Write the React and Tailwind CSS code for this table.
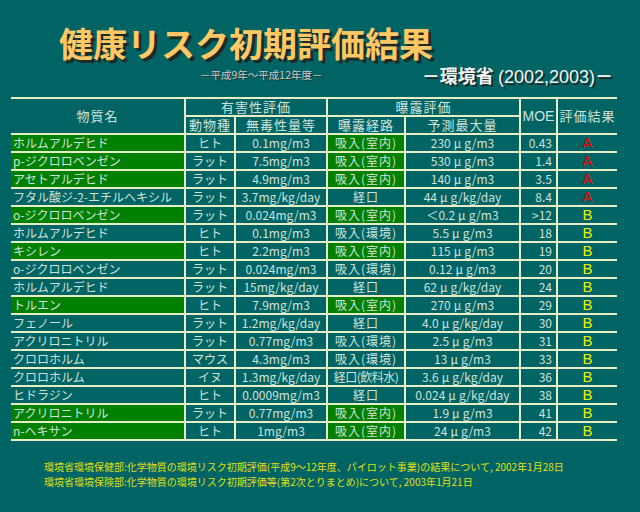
import React from "react";

const rows = [
  ["ホルムアルデヒド", "ヒト", "0.1mg/m3", "吸入(室内)", "230", "g/m3", "0.43", "A", true],
  ["p-ジクロロベンゼン", "ラット", "7.5mg/m3", "吸入(室内)", "530", "g/m3", "1.4", "A", true],
  ["アセトアルデヒド", "ラット", "4.9mg/m3", "吸入(室内)", "140", "g/m3", "3.5", "A", true],
  ["フタル酸ジ-2-エチルヘキシル", "ラット", "3.7mg/kg/day", "経口", "44", "g/kg/day", "8.4", "A", false],
  ["o-ジクロロベンゼン", "ラット", "0.024mg/m3", "吸入(室内)", "＜0.2", "g/m3", ">12", "B", true],
  ["ホルムアルデヒド", "ヒト", "0.1mg/m3", "吸入(環境)", "5.5", "g/m3", "18", "B", false],
  ["キシレン", "ヒト", "2.2mg/m3", "吸入(室内)", "115", "g/m3", "19", "B", true],
  ["o-ジクロロベンゼン", "ラット", "0.024mg/m3", "吸入(環境)", "0.12", "g/m3", "20", "B", false],
  ["ホルムアルデヒド", "ラット", "15mg/kg/day", "経口", "62", "g/kg/day", "24", "B", false],
  ["トルエン", "ヒト", "7.9mg/m3", "吸入(室内)", "270", "g/m3", "29", "B", true],
  ["フェノール", "ラット", "1.2mg/kg/day", "経口", "4.0", "g/kg/day", "30", "B", false],
  ["アクリロニトリル", "ラット", "0.77mg/m3", "吸入(環境)", "2.5", "g/m3", "31", "B", false],
  ["クロロホルム", "マウス", "4.3mg/m3", "吸入(環境)", "13", "g/m3", "33", "B", false],
  ["クロロホルム", "イヌ", "1.3mg/kg/day", "経口(飲料水)", "3.6", "g/kg/day", "36", "B", false],
  ["ヒドラジン", "ヒト", "0.0009mg/m3", "経口", "0.024", "g/kg/day", "38", "B", false],
  ["アクリロニトリル", "ラット", "0.77mg/m3", "吸入(室内)", "1.9", "g/m3", "41", "B", true],
  ["n-ヘキサン", "ヒト", "1mg/m3", "吸入(室内)", "24", "g/m3", "42", "B", true],
];

const teal = "bg-[#006464]";

export default function App() {
  return (
    <div className="w-[640px] h-[512px] bg-[#006464] overflow-hidden font-['Noto_Sans_CJK_JP',sans-serif] text-[#d0e2dc]">
      <div className="h-[97px] flex flex-col">
        <div className="mt-[25px] pl-[59px] h-[36px] text-[34px] leading-[36px] font-bold text-[#ffc864] [text-shadow:3px_3px_0_#1c2a28] whitespace-nowrap">
          健康リスク初期評価結果
        </div>
        <div className="flex h-[36px]">
          <div className="ml-[200px] mt-[7px] text-[10.5px] leading-[14px] text-[#c4cfcc] [text-shadow:1px_1px_0_#203030] whitespace-nowrap">
            －平成9年～平成12年度－
          </div>
          <div className="ml-auto mr-[27px] mt-[3px] text-[18px] leading-[22px] text-[#f4f4f4] [text-shadow:2px_2px_0_#1c2a28] whitespace-nowrap">
            <span className="font-bold">－環境省 </span>
            <span className="font-['Liberation_Sans',sans-serif]">(2002,2003)</span>
            <span className="font-bold">－</span>
          </div>
        </div>
      </div>

      <div className="ml-[11px] w-[606px] grid grid-cols-[173px_48px_90px_76px_113px_35px_59px] auto-rows-[16px] gap-[2px] bg-[#e6eec6] border-y-2 border-[#e6eec6] text-[12px] leading-[16px]">
        <div className={`${teal} row-span-2 flex items-center justify-center text-[13px] tracking-[1px]`}>物質名</div>
        <div className={`${teal} col-span-2 text-center text-[13px] tracking-[1px]`}>有害性評価</div>
        <div className={`${teal} col-span-2 text-center text-[13px] tracking-[1px]`}>曝露評価</div>
        <div className={`${teal} row-span-2 flex items-center justify-center text-[14px] font-['Liberation_Sans',sans-serif]`}>MOE</div>
        <div className={`${teal} row-span-2 flex items-center justify-center text-[13px] tracking-[1px]`}>評価結果</div>
        <div className={`${teal} text-center text-[13px] tracking-[1px]`}>動物種</div>
        <div className={`${teal} text-center text-[13px] tracking-[1px]`}>無毒性量等</div>
        <div className={`${teal} text-center text-[13px] tracking-[1px]`}>曝露経路</div>
        <div className={`${teal} text-center text-[13px] tracking-[1px]`}>予測最大量</div>

        {rows.map((r, i) => (
          <React.Fragment key={i}>
            <div className={`${r[8] ? "bg-[#008000]" : teal} pl-[2px] whitespace-nowrap overflow-hidden`}>{r[0]}</div>
            <div className={`${teal} text-center whitespace-nowrap`}>{r[1]}</div>
            <div className={`${teal} text-center whitespace-nowrap overflow-hidden`}>{r[2]}</div>
            <div className={`${r[8] ? "bg-[#008000]" : teal} text-center whitespace-nowrap overflow-hidden ${r[3].length > 6 ? "tracking-[-0.5px]" : "tracking-[1px]"}`}>{r[3]}</div>
            <div className={`${teal} text-center whitespace-nowrap`}>
              {r[4]}
              <span className="mx-[3px]">μ</span>
              {r[5]}
            </div>
            <div className={`${teal} text-right pr-[4px] whitespace-nowrap`}>{r[6]}</div>
            <div className={`${teal} text-center text-[15px] font-['Liberation_Sans',sans-serif] ${r[7] === "A" ? "text-[#f00000]" : "text-[#f0f000]"}`}>{r[7]}</div>
          </React.Fragment>
        ))}
      </div>

      <div className="mt-[18px] pl-[44px] text-[10px] leading-[15px] text-[#e0e010] whitespace-nowrap">
        <div>環境省環境保健部:化学物質の環境リスク初期評価(平成9～12年度、パイロット事業)の結果について, 2002年1月28日</div>
        <div>環境省環境保険部:化学物質の環境リスク初期評価等(第2次とりまとめ)について, 2003年1月21日</div>
      </div>
    </div>
  );
}
